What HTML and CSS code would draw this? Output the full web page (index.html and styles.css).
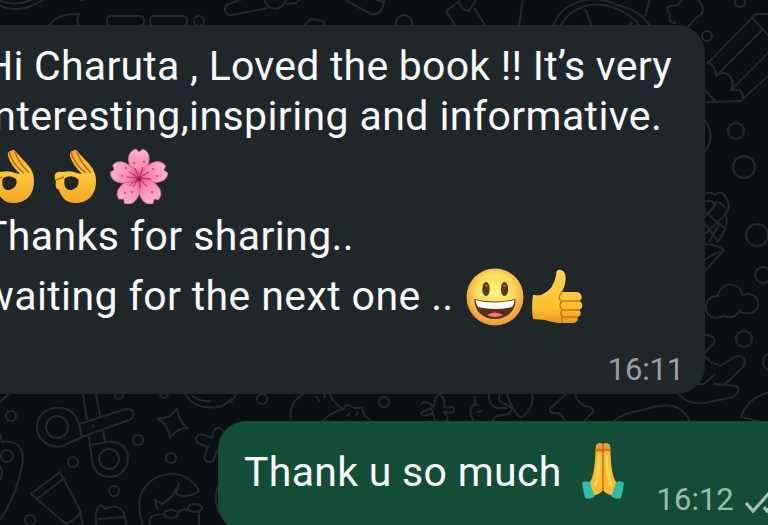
FILE: index.html
```
<!DOCTYPE html>
<html lang="en">
<head>
  <meta charset="UTF-8" />
  <meta name="viewport" content="width=device-width, initial-scale=1.0"/>
  <title>Chat</title>
  <link rel="stylesheet" href="styles.css">
</head>
<body>

  <!-- wallpaper doodles -->
  <svg class="wallpaper" viewBox="0 0 768 525" aria-hidden="true">
    <!-- top strip -->
    <path d="M-6 2Q17 18 46 -2M-6 -2Q16 10 38 -4M49 25Q59 13 79 14Q76 20 79 26M80 0l3 0"/>
    <rect x="107" y="16" width="37" height="10" rx="4"/>
    <rect x="150" y="16" width="37" height="10" rx="4"/>
    <circle cx="199" cy="21" r="5"/>
    <path d="M245 -2L229 4C222 7 225 16 232 15L268 8M264 -2C266 12 284 12 286 -1M286 4L296 3L301 -2M303 26L311 19L323 21L326 27M345 0L371 14Q383 16 384 0M376 0L384 2"/>
    <circle cx="404" cy="23" r="8"/>
    <path d="M455 25L446 11L458 2L461 -2M458 2L463 9L469 11L477 -2M474 8L485 25M523 -2L519 26M553 26C562 1 592 -7 617 5Q640 10 650 26M560 26C572 6 592 1 612 7Q632 14 640 26M585 9L592 26M650 -2L645 17M629 25l4 -3"/>
    <path d="M683 -1C675 5 684 3 675 6C668 5 664 10 670 14C669 20 669 23 676 23M696 -2C707 7 703 15 697 17L687 28"/>
    <circle cx="740" cy="2" r="5"/><circle cx="707" cy="36" r="5"/>
    <!-- pencil -->
    <path d="M770 14H758Q754 14 750 20L707 64M752 18L770 37M763 29L716 76M770 51L731 90M770 74L743 99Q742 101 738 101L716 102H704M704 89L715 101M707 62Q716 65 716 76Q720 71 728 74Q735 81 731 90Q743 87 743 99"/>
    <path d="M704 119Q717 136 704 153"/>
    <circle cx="736" cy="131" r="8"/><circle cx="744" cy="167" r="11"/>
    <!-- corn -->
    <path d="M704 195Q710 190 714 195Q723 189 726 198Q732 206 725 214Q731 224 717 243M704 202Q715 198 714 208M714 203Q721 201 725 208M705 217L716 204M705 234L726 214M704 211L724 228M704 222L717 240M709 242L720 223M704 244Q716 244 724 250L704 272M704 260L720 251"/>
    <circle cx="757" cy="235" r="11"/><circle cx="763" cy="275" r="8"/>
    <path d="M718 296C721 280 742 282 742 295C762 289 764 316 745 313Q737 312 740 310Q735 320 724 316C702 325 700 295 718 296Z"/>
    <circle cx="744" cy="339" r="8"/><circle cx="772" cy="362" r="9"/>
    <!-- hand -->
    <path d="M704 335C714 334 718 341 711 346L704 354M704 356L712 363Q716 363 720 366L735 357C746 353 747 363 741 369L724 385M714 384L736 386C742 389 736 397 729 398L704 403Q689 405 678 394M697 384H704L715 374"/>
    <path d="M770 392Q748 397 741 417L770 424M575 392Q575 401 585 406Q598 408 591 414L584 421M614 421Q625 412 640 411Q665 402 678 408Q687 413 690 422"/>
    <!-- bottom left: scissors, star, tube, faces -->
    <circle cx="57" cy="427" r="11"/>
    <path d="M82 437L63 446C48 449 37 439 37 427C37 414 47 408 58 408C70 408 75 413 79 424ZM79 424L126 409C135 408 136 418 129 420L82 437M83 394L87 420M96 394L100 416M89 435L90 445M103 431L105 442M90 445L92 461C94 472 101 477 110 477C121 477 128 468 128 458C128 447 118 440 107 442Z"/>
    <circle cx="109" cy="459" r="10"/>
    <circle cx="93" cy="426" r=".6"/>
    <circle cx="11" cy="416" r="5"/><circle cx="73" cy="462" r="5"/><circle cx="138" cy="440" r="5"/><circle cx="171" cy="458" r="5"/><circle cx="114" cy="491" r="5"/><circle cx="30" cy="520" r="5"/><circle cx="7" cy="456" r="6"/>
    <circle cx="119" cy="395" r="4"/><circle cx="164" cy="394" r="4"/>
    <path d="M177 409Q179 423 188 428Q177 428 170 438Q169 425 158 419Q171 418 177 409ZM224 433C221 426 216 427 214 431L212 438L204 435C197 433 192 441 200 444L208 447L204 458Q207 464 213 461L218 449"/>
    <path d="M185 394Q195 410 218 407Q226 405 232 398M192 396Q201 402 211 401M0 402L9 394M0 434L2 442C20 439 25 452 22 466Q16 497 0 520M0 466Q4 473 0 480"/>
    <path d="M31 494L60 472L81 512L76 518L66 524ZM37 499L63 479M80 513L83 526"/>
    <path d="M143 525C130 490 153 473 174 474C187 475 196 484 199 491Q188 499 176 494L179 484Q173 498 162 504L155 500L158 510M97 526Q93 510 101 505L105 509Q119 502 124 514L127 526M98 519L125 517M218 486Q213 500 220 515"/>
    <ellipse cx="171" cy="514" rx="7" ry="4"/><ellipse cx="195" cy="508" rx="7" ry="4"/>
    <path d="M178 513Q183 507 188 511M150 525Q148 517 155 515L164 514M199 512V526"/>
    <!-- strip between the bubbles -->
    <circle cx="262" cy="399" r="5"/><circle cx="384" cy="402" r="5"/>
    <path d="M230 403L237 394M304 394Q288 402 291 420M329 394Q336 405 343 409M316 396l4 6M324 394l1 4M330 395l3 6M323 421Q329 413 343 409L347 404L354 408L362 408L365 416L371 421M347 416l3 -3M356 416l2 -5"/>
    <path d="M421 405C424 398 432 405 434 407Q435 394 440 395Q446 398 444 407Q455 405 454 411Q452 414 444 412Q450 419 446 421M435 420L433 413Q422 418 421 413L431 408Z"/>
    <path d="M474 396Q477 403 472 407Q468 415 474 420M474 404l5 1M477 412l5 -1M489 394Q487 404 497 408L507 408M500 394Q496 402 507 405L512 409L509 414L496 416L492 421M507 394Q512 411 521 418Q535 408 532 394M566 394L550 409Q549 414 559 413L565 420"/>
  </svg>

  <main class="chat">
    <div class="bubble received">
      <p class="line first">Hi Charuta , Loved the book !! It’s very</p>
      <p class="line second">interesting,inspiring and informative.</p>
      <div class="line emoji-line">
        <svg class="emoji ok" viewBox="0 0 44 56"><use href="#ok-hand"/></svg>
        <svg class="emoji ok" viewBox="0 0 44 56"><use href="#ok-hand"/></svg>
        <svg class="emoji flower" viewBox="0 0 58 56">
          <defs>
            <linearGradient id="petal" x1="0" y1="0" x2="0" y2="1">
              <stop offset="0" stop-color="#fdb3d0"/><stop offset=".6" stop-color="#f78ab5"/><stop offset="1" stop-color="#d94880"/>
            </linearGradient>
            <path id="petal-shape" d="M29 31C21 23 17 15 19 7Q21 2 26 1L29 4L33 1Q38 3 39 8C40 16 36 24 29 31Z"/>
          </defs>
          <g fill="url(#petal)" stroke="#d9628f" stroke-width=".7">
            <use href="#petal-shape"/>
            <use href="#petal-shape" transform="rotate(72 29 30)"/>
            <use href="#petal-shape" transform="rotate(144 29 30)"/>
            <use href="#petal-shape" transform="rotate(216 29 30)"/>
            <use href="#petal-shape" transform="rotate(288 29 30)"/>
          </g>
          <path d="M29 30L25 20M29 30L33 19M29 30L39 24M29 30L41 31M29 30L37 39M29 30L30 40M29 30L23 39M29 30L19 38M29 30L17 29M29 30L19 24" stroke="#b92b62" stroke-width="1" fill="none"/>
          <g fill="#a77b46"><circle cx="24" cy="15" r="1.2"/><circle cx="34" cy="14" r="1.2"/><circle cx="43" cy="21" r="1.2"/><circle cx="47" cy="28" r="1.2"/><circle cx="42" cy="44" r="1.2"/><circle cx="22" cy="44" r="1.2"/><circle cx="15" cy="45" r="1.2"/><circle cx="12" cy="28" r="1.2"/><circle cx="16" cy="20" r="1.2"/></g>
          <circle cx="29" cy="31" r="2.5" fill="#a91f55"/>
        </svg>
      </div>
      <p class="line fourth">Thanks for sharing..</p>
      <div class="line fifth">
        <p class="words">waiting for the next one ..</p>
        <svg class="emoji smile" viewBox="0 0 58 58">
          <defs>
            <radialGradient id="face" cx=".5" cy=".42" r=".58">
              <stop offset="0" stop-color="#fff07a"/><stop offset=".55" stop-color="#fddc5c"/><stop offset="1" stop-color="#ee9430"/>
            </radialGradient>
          </defs>
          <circle cx="29" cy="29" r="28.5" fill="url(#face)"/>
          <ellipse cx="20" cy="21" rx="3.7" ry="7" fill="#5a381d"/>
          <ellipse cx="38.5" cy="21" rx="3.7" ry="7" fill="#5a381d"/>
          <path d="M19 18q2-2 2 1M37 18q2-2 2 1" stroke="#a88358" stroke-width="1.2" fill="none"/>
          <path d="M8.5 31Q29 36 49.5 31C50 43 41 51 29 51S8 43 8.5 31Z" fill="#5c2f13"/>
          <path d="M9.5 32Q29 37 48.5 32Q48 37 46 39Q29 43 12 39Q10 36 9.5 32Z" fill="#fff"/>
          <path d="M21 47Q29 42 37 47Q29 51 21 47Z" fill="#f47a80"/>
        </svg>
        <svg class="emoji thumb" viewBox="0 0 52 56">
          <defs>
            <linearGradient id="skin" x1="0" y1="0" x2="0" y2="1">
              <stop offset="0" stop-color="#ffd452"/><stop offset=".7" stop-color="#fcc12d"/><stop offset="1" stop-color="#e89a20"/>
            </linearGradient>
          </defs>
          <path d="M2 26C7 26 9 27 12 25Q23 20 25 6Q25 0 30 1C37 3 35 15 31 23H46C52 24 52 31 48 32C53 34 52 40 48 41C51 43 50 48 46 48C48 51 46 54 42 54H27Q19 53 14 51L2 50Q0 38 2 26Z" fill="url(#skin)"/>
          <path d="M31 23Q26 29 30 32M48 32H31Q27 37 31 40M48 41H31Q28 45 32 48M46 48H32Q29 51 32 54" stroke="#c47519" stroke-width="1.4" fill="none"/>
        </svg>
      </div>
      <span class="time">16:11</span>
    </div>

    <div class="bubble sent">
      <p class="words">Thank u so much</p>
      <svg class="emoji pray" viewBox="0 0 44 58">
        <path d="M2 40Q6 38 11 41L14 54Q10 58 4 56Q2 48 1 41Z" fill="#29bfaa"/>
        <path d="M42 40Q38 38 33 41L30 54Q34 58 40 56Q42 48 43 41Z" fill="#29bfaa"/>
        <path d="M15 3Q18 0 22 2V48Q18 53 13 53L9 40C13 34 14 23 15 3Z" fill="#fdb92f"/>
        <path d="M29 3Q26 0 22 2V48Q26 53 31 53L35 40C31 34 30 23 29 3Z" fill="#fdb92f"/>
        <path d="M15 3Q18 0 22 2V11Q17 8 14.5 11ZM29 3Q26 0 22 2V11Q27 8 29.5 11Z" fill="#ee9a30"/>
        <path d="M22 2V48M15 9Q18 6 22 9Q26 6 29 9" stroke="#bb6a14" stroke-width="1.3" fill="none"/>
        <path d="M18.500 13Q18 32 14 44M25.500 13Q26 32 30 44" stroke="#ffd95c" stroke-width="2.500" fill="none"/>
      </svg>
      <span class="time">16:12</span>
      <svg class="ticks" viewBox="0 0 36 26">
        <path d="M2 14L9 22L27 2M20 18L23 22L41 2"/>
      </svg>
    </div>
  </main>

  <!-- shared shapes -->
  <svg class="shapes" aria-hidden="true">
    <defs>
      <linearGradient id="hand" x1="0" y1="0" x2="0" y2="1">
        <stop offset="0" stop-color="#f5a82c"/><stop offset=".45" stop-color="#ffc737"/><stop offset="1" stop-color="#f3a624"/>
      </linearGradient>
      <g id="ok-hand">
        <path d="M19 3Q21 0 24 4L36 17Q42 24 42 33C42 48 33 55 21 55C11 55 7 48 5 42Q0 39 2 34Q0 30 1 26Q3 23 9 24Q17 22 23 25L28 26Q18 16 16 8Q15 3 19 3ZM11 30C9 35 11 43 17 42C23 41 26 36 24 31Q18 26 11 30Z" fill="url(#hand)" fill-rule="evenodd"/>
        <path d="M17 4Q20 16 32 25M23 4Q26 14 37 25M2 32L10 29" stroke="#b96a18" stroke-width="1.5" fill="none"/>
      </g>
    </defs>
  </svg>

</body>
</html>
```
FILE: styles.css
```
:root {
  --wall: #0a0f13;
  --doodle: #23292d;
  --received: #20272b;
  --sent: #144d37;
  --text: #f7f9fa;
}

* {
  box-sizing: border-box;
}

body {
  margin: 0;
  height: 525px;
  overflow: hidden;
  background: var(--wall);
  color: var(--text);
  font-family: Roboto, sans-serif;
  font-size: 41px;
}

p {
  margin: 0;
}

.wallpaper {
  position: absolute;
  top: 0;
  left: 0;
  width: 768px;
  height: 525px;
  fill: none;
  stroke: var(--doodle);
  stroke-width: 2;
  stroke-linejoin: round;
}

.shapes {
  display: block;
  width: 0;
  height: 0;
}

.chat {
  position: relative;
  display: flex;
  flex-direction: column;
  gap: 27px;
  height: 525px;
  padding-top: 25px;
  overflow: hidden;
}

.bubble {
  flex: none;
  border-radius: 28px;
  white-space: nowrap;
}

.received {
  display: flex;
  flex-direction: column;
  width: 745px;
  height: 369px;
  margin-left: -40px;
  padding: 16px 23px 0;
  background: var(--received);
}

.line {
  height: 50px;
  line-height: 50px;
  letter-spacing: 0.4px;
}

.first {
  padding-left: 1px;
  letter-spacing: 0.24px;
}

.emoji-line {
  display: flex;
  align-items: center;
  gap: 18px;
  height: 70px;
  padding-left: 9px;
}

.emoji {
  display: block;
  flex: none;
}

.ok {
  width: 44px;
  height: 56px;
}

.flower {
  width: 58px;
  height: 56px;
  margin-left: -6px;
}

.fifth {
  display: flex;
  align-items: center;
  height: 71px;
  line-height: 71px;
}

.smile {
  width: 58px;
  height: 58px;
  margin-left: 12px;
}

.thumb {
  width: 52px;
  height: 56px;
  margin-left: 7px;
}

.time {
  font-size: 31px;
  line-height: 36px;
  color: #9a9fa2;
}

.received .time {
  align-self: flex-end;
  margin-top: 20px;
  margin-right: -2px;
  letter-spacing: -0.2px;
}

.sent {
  display: flex;
  align-items: flex-start;
  width: 590px;
  height: 111px;
  margin-left: 218px;
  padding: 20px 0 0 26px;
  background: var(--sent);
}

.sent .words {
  line-height: 62px;
  letter-spacing: 0.3px;
}

.pray {
  width: 44px;
  height: 58px;
  margin: 1px 0 0 19px;
}

.sent .time {
  margin: 41px 0 0 32px;
  color: #9dbab0;
}

.ticks {
  width: 36px;
  height: 26px;
  margin: 48px 0 0 10px;
  overflow: visible;
  fill: none;
  stroke: #a5beb5;
  stroke-width: 3.2;
}
```
